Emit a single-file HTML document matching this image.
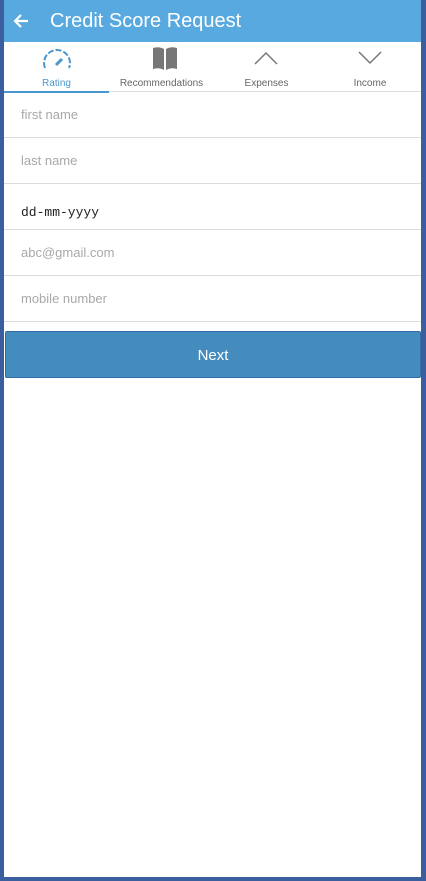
<!DOCTYPE html>
<html><head><meta charset="utf-8"><style>
*{margin:0;padding:0;box-sizing:border-box}
body{width:426px;height:881px;background:#3b5f9e;position:relative;overflow:hidden;font-family:"Liberation Sans",sans-serif}
.frame{position:absolute;left:4px;top:0;width:417px;height:877px;background:#fff}
.hdr{height:42px;background:#57a9df;color:#fff;position:relative}
.hdr .t{position:absolute;left:46px;top:10px;font-size:20px}
.tabs{height:50px;position:relative;border-bottom:1px solid #ddd}
.tab{position:absolute;top:0;height:50px;text-align:center;font-size:10px;color:#666}
.tab span{position:absolute;left:0;right:0;top:36px}
.row{height:46px;border-bottom:1px solid #dcdcdc;padding-left:17px;font-size:13px;color:#a8a8a8;line-height:45px}
.btn{position:absolute;left:1px;top:331px;width:416px;height:47px;background:#448cbd;border:1px solid #2f6ea8;border-radius:2px;color:#fff;text-align:center;line-height:47px;font-size:15px}
</style></head><body>
<div class="frame">
<div class="hdr">
<svg style="position:absolute;left:8px;top:12px" width="18" height="18" viewBox="0 0 18 18"><path d="M16 9H3M9 3L3 9l6 6" stroke="#fff" stroke-width="2.2" fill="none"/></svg>
<div class="t">Credit Score Request</div></div>
<div class="tabs">
<div class="tab" style="left:0;width:105px;color:#4a97cf"><svg style="position:absolute;left:38px;top:6px" width="30" height="22" viewBox="0 0 30 22"><path d="M3 20A13 13 0 1 1 27 20" stroke="#4a97cf" stroke-width="2" fill="none" stroke-dasharray="6 2"/><path d="M14 17l6-6" stroke="#4a97cf" stroke-width="3"/></svg><span>Rating</span>
<div style="position:absolute;left:0;bottom:-1px;width:105px;height:2px;background:#4a97cf"></div></div>
<div class="tab" style="left:105px;width:105px"><svg style="position:absolute;left:43px;top:4px" width="26" height="26" viewBox="0 0 26 26"><path d="M1 2Q7 0 12 3V24Q7 21 1 23Z M14 3Q19 0 25 2V23Q19 21 14 24Z" fill="#777"/></svg><span>Recommendations</span></div>
<div class="tab" style="left:210px;width:105px"><svg style="position:absolute;left:40px;top:9px" width="24" height="14" viewBox="0 0 24 14"><path d="M1 13L12 2l11 11" stroke="#777" stroke-width="1.5" fill="none"/></svg><span>Expenses</span></div>
<div class="tab" style="left:315px;width:102px"><svg style="position:absolute;left:39px;top:9px" width="24" height="14" viewBox="0 0 24 14"><path d="M1 1l11 11L23 1" stroke="#777" stroke-width="1.5" fill="none"/></svg><span>Income</span></div>
</div>
<div class="row">first name</div>
<div class="row">last name</div>
<div class="row" style="font-family:'Liberation Mono',monospace;color:#222;font-size:13px;padding-top:6px">dd-mm-yyyy</div>
<div class="row">abc@gmail.com</div>
<div class="row">mobile number</div>
<div class="btn">Next</div>
</div>
</body></html>
